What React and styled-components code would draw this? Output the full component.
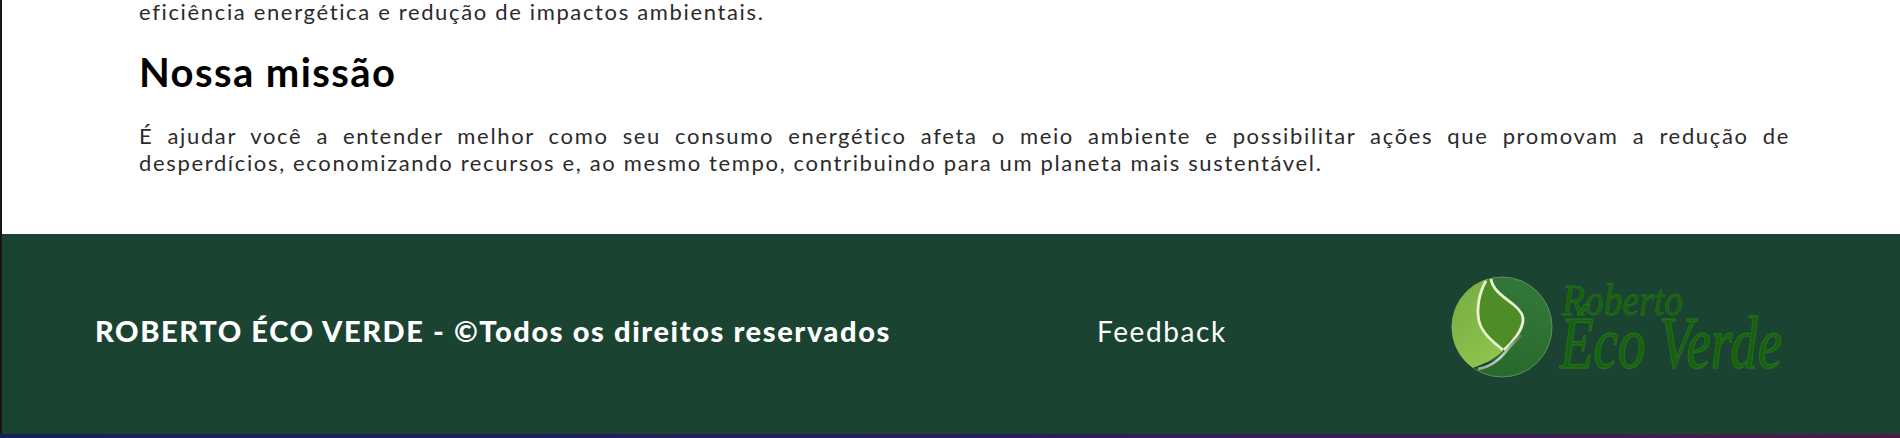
import React from 'react';
import styled, { createGlobalStyle } from 'styled-components';

const GlobalStyle = createGlobalStyle`
  html, body {
    margin: 0;
    padding: 0;
    height: 438px;
    overflow: hidden;
    background: linear-gradient(90deg, #18205e 0%, #2a1f5e 50%, #4c1a4a 100%);
  }
  body {
    font-family: 'Lato', 'Noto Sans', sans-serif;
  }
`;

const Page = styled.div`
  display: flex;
  flex-direction: column;
  height: 434px;
  margin-left: 2px;
  box-shadow: -2px 0 0 #17121c;
`;

const Content = styled.main`
  flex: 0 0 234px;
  box-sizing: border-box;
  padding: 0 110px 0 137px;
  background: #fff;
  overflow: hidden;
`;

const Text = styled.p`
  margin: 0;
  font-size: 22px;
  line-height: 27px;
  letter-spacing: 1.65px;
  color: #2b2b2b;
  text-align: justify;
`;

const LeadText = styled(Text)`
  line-height: 23px;
`;

const Title = styled.h2`
  margin: 25px 0 26px;
  font-size: 40px;
  line-height: 48px;
  font-weight: 700;
  letter-spacing: 1.4px;
  color: #000;
`;

const Footer = styled.footer`
  flex: 1;
  display: flex;
  align-items: center;
  padding: 0 0 4px 93px;
  background: #1b4332;
  color: #fff;
`;

const Copy = styled.strong`
  width: 1002px;
  margin-bottom: 3px;
  font-size: 29px;
  font-weight: 900;
  letter-spacing: 1.6px;
  white-space: nowrap;
`;

const FeedbackLink = styled.a`
  width: 355px;
  margin-bottom: 2px;
  font-size: 28px;
  letter-spacing: 1.6px;
  color: #fff;
  text-decoration: none;
`;

const Logo = styled.svg`
  width: 340px;
  height: 110px;
  display: block;
  margin-bottom: 10px;
  overflow: visible;
`;

const LogoWord = styled.text`
  font-family: 'Liberation Serif', serif;
  font-style: italic;
  font-size: ${(p) => p.$size}px;
  fill: #176010;
  stroke: #236f1a;
  stroke-width: ${(p) => p.$stroke}px;
`;

const EcoLogo = () => (
  <Logo viewBox="0 0 340 110">
    <defs>
      <linearGradient id="lightLeaf" x1="0" y1="0" x2="0.5" y2="1">
        <stop offset="0" stopColor="#74ab42" />
        <stop offset="1" stopColor="#8fc24c" />
      </linearGradient>
      <linearGradient id="darkDisc" x1="0.8" y1="0" x2="0.4" y2="1">
        <stop offset="0" stopColor="#33783a" />
        <stop offset="1" stopColor="#27692b" />
      </linearGradient>
      <linearGradient id="silver" x1="0" y1="1" x2="1" y2="0">
        <stop offset="0" stopColor="#8ea68e" />
        <stop offset="0.45" stopColor="#c9d2c9" />
        <stop offset="1" stopColor="#4f7f52" />
      </linearGradient>
    </defs>
    <g transform="translate(0 5)">
      <circle cx="50" cy="50" r="50" fill="url(#darkDisc)" stroke="#6d9a6a" strokeWidth="0.8" />
      <path d="M36 2 A50 50 0 0 0 21 91 C32 88 42 82 51 74 L29 50 Z" fill="url(#lightLeaf)" />
      <path d="M21 91 L26 92.5 C34 90 42 87 48 82 L38 84 Z" fill="#1b4332" />
      <path d="M39 2 C41 14 52 20 62 28 C68 33 72 38 71 44 C70 54 60 66 52 73 C40 64 30 56 27 44 C24 30 28 14 34 4 Z" fill="#4e8c25" />
      <path d="M39 2 C41 14 52 20 62 28 C68 33 72 38 71 44 C70 54 60 66 52 73" fill="none" stroke="#e6f4d2" strokeWidth="2.8" />
      <path d="M34 4 C28 14 24 30 27 44 C30 56 40 64 51 73" fill="none" stroke="#e6f4d2" strokeWidth="2.8" />
      <path d="M26 92 C38 90 47 84 56 72 C60 67 65 62 69 58" fill="none" stroke="url(#silver)" strokeWidth="2.8" />
    </g>
    <LogoWord $size={44} $stroke={0.8} x="110" y="43" textLength="121" lengthAdjust="spacingAndGlyphs">Roberto</LogoWord>
    <LogoWord $size={74} $stroke={1.4} x="108" y="96" textLength="222" lengthAdjust="spacingAndGlyphs">Éco Verde</LogoWord>
  </Logo>
);

export default function App() {
  return (
    <>
      <GlobalStyle />
      <Page>
        <Content>
          <LeadText>eficiência energética e redução de impactos ambientais.</LeadText>
          <Title>Nossa missão</Title>
          <Text>
            É ajudar você a entender melhor como seu consumo energético afeta o meio ambiente e possibilitar ações que promovam a redução de desperdícios, economizando recursos e, ao mesmo tempo, contribuindo para um planeta mais sustentável.
          </Text>
        </Content>
        <Footer>
          <Copy>ROBERTO ÉCO VERDE - ©Todos os direitos reservados</Copy>
          <FeedbackLink href="#">Feedback</FeedbackLink>
          <EcoLogo />
        </Footer>
      </Page>
    </>
  );
}
